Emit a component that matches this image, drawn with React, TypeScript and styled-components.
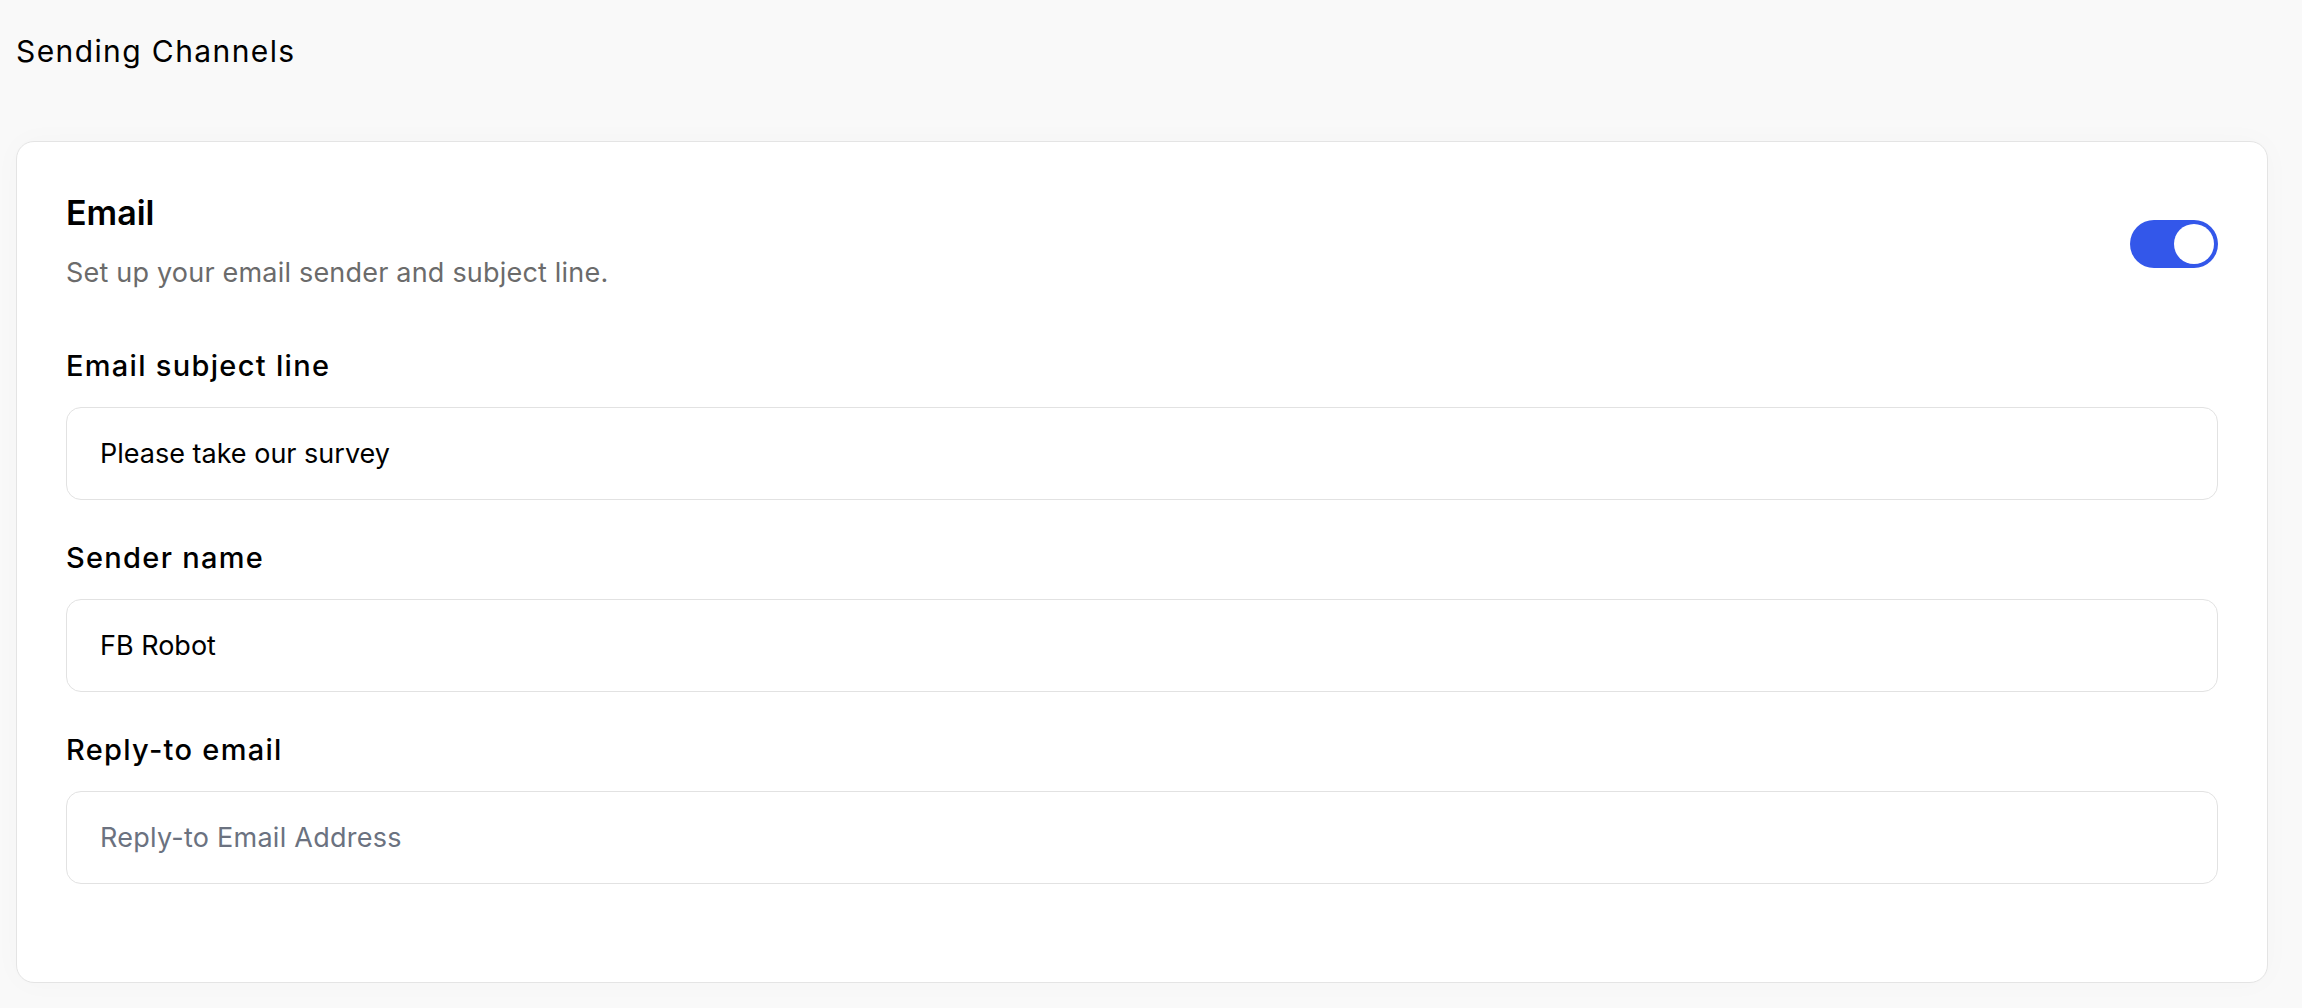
import React from 'react'
import styled, { createGlobalStyle } from 'styled-components'

const GlobalStyle = createGlobalStyle`
  html, body {
    margin: 0;
    padding: 0;
    background-color: #f9f9f9;
    font-family: Inter, 'Open Sans', sans-serif;
  }
  * {
    box-sizing: border-box;
  }
`

const fields = [
  { label: 'Email subject line', value: 'Please take our survey', placeholder: 'Email Subject Line' },
  { label: 'Sender name', value: 'FB Robot', placeholder: 'Sender Name' },
  { label: 'Reply-to email', value: '', placeholder: 'Reply-to Email Address' },
]

const App: React.FC = () => {
  return (
    <Page>
      <GlobalStyle />
      <Heading>Sending Channels</Heading>
      <Card>
        <CardHeader>
          <div>
            <Title>Email</Title>
            <Subtitle>Set up your email sender and subject line.</Subtitle>
          </div>
          <Toggle role="switch" aria-checked $on>
            <Knob />
          </Toggle>
        </CardHeader>
        <Fields>
          {fields.map((f) => (
            <Field key={f.label}>
              <Label>{f.label}</Label>
              <Input defaultValue={f.value} placeholder={f.placeholder} />
            </Field>
          ))}
        </Fields>
      </Card>
    </Page>
  )
}

const Page = styled.div`
  min-height: 1008px;
  padding: 33px 34px 26px 16px;
`

const Heading = styled.h2`
  margin: 0 0 72px 0;
  font-size: 30px;
  line-height: 36px;
  font-weight: 400;
  letter-spacing: 1.4px;
  color: #000;
`

const Card = styled.div`
  background-color: #ffffff;
  border: 1px solid #e4e4e4;
  border-radius: 18px;
  padding: 50px 49px 98px 49px;
  box-shadow: 0 0 30px rgba(0, 0, 0, 0.025);
`

const CardHeader = styled.div`
  display: flex;
  align-items: center;
  justify-content: space-between;
  margin-bottom: 57px;
`

const Title = styled.div`
  font-size: 34px;
  line-height: 42px;
  font-weight: 600;
  color: #000;
  margin-bottom: 21px;
`

const Subtitle = styled.div`
  font-size: 27px;
  line-height: 36px;
  font-weight: 400;
  letter-spacing: 0.2px;
  color: #6b6b6b;
`

const Toggle = styled.div<{ $on?: boolean }>`
  width: 88px;
  height: 48px;
  border-radius: 24px;
  padding: 4px;
  display: flex;
  justify-content: ${(p) => (p.$on ? 'flex-end' : 'flex-start')};
  background-color: ${(p) => (p.$on ? '#3357ea' : '#d4d4d8')};
  margin-top: 4px;
  cursor: pointer;
`

const Knob = styled.div`
  width: 40px;
  height: 40px;
  border-radius: 50%;
  background-color: #ffffff;
`

const Fields = styled.div`
  display: flex;
  flex-direction: column;
  gap: 40px;
`

const Field = styled.div`
  display: flex;
  flex-direction: column;
  gap: 23px;
`

const Label = styled.label`
  font-size: 29px;
  line-height: 36px;
  font-weight: 500;
  letter-spacing: 1.3px;
  color: #000;
`

const Input = styled.input`
  height: 93px;
  width: 100%;
  border: 1.5px solid #e2e2e2;
  border-radius: 15px;
  padding: 0 33px;
  font-family: Inter, 'Open Sans', sans-serif;
  font-size: 27px;
  color: #000;
  background: #ffffff;
  outline: none;
  &::placeholder {
    color: #6b7280;
    letter-spacing: 0.25px;
  }
`

export default App
